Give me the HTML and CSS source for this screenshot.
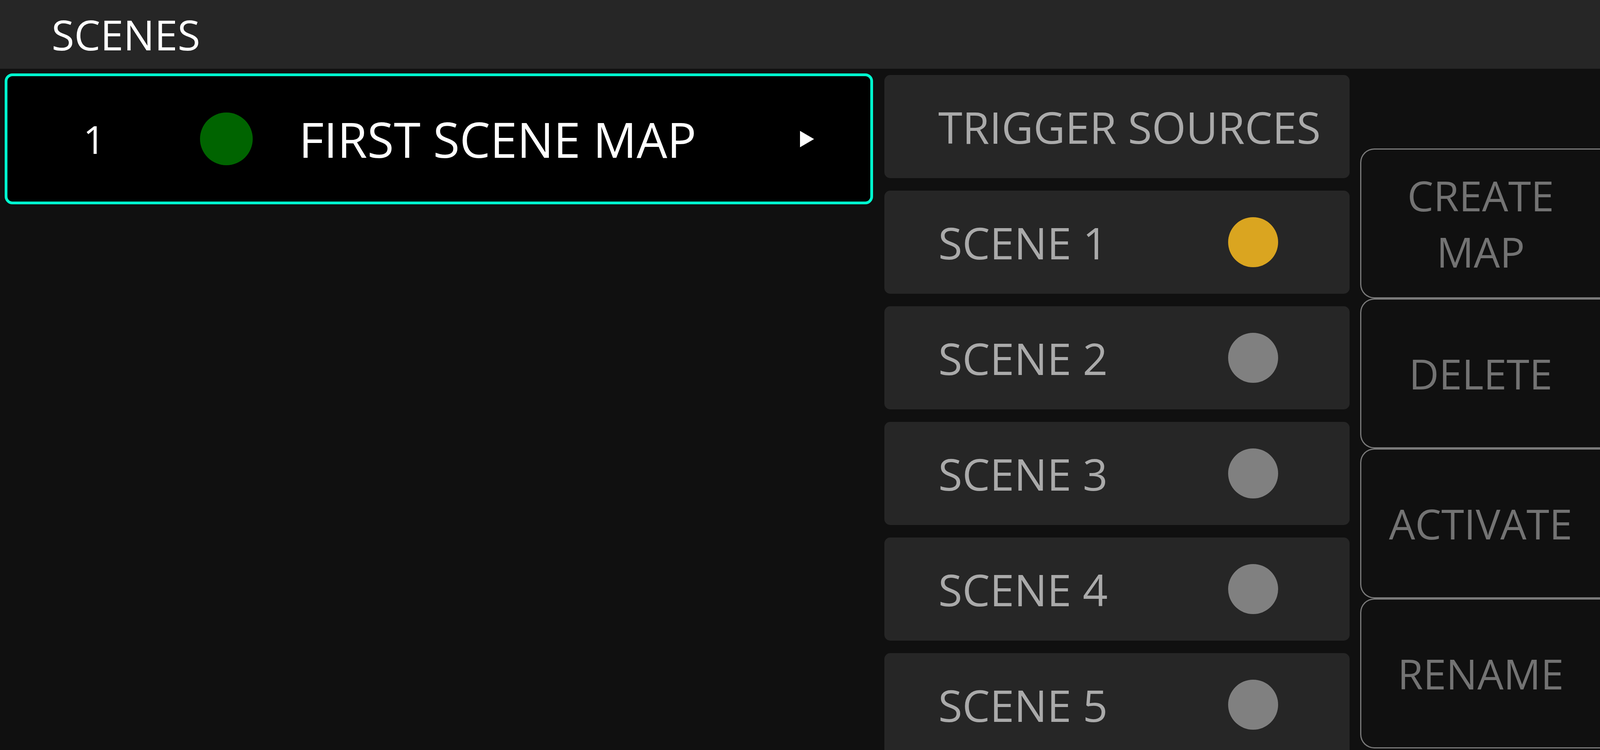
FILE: index.html
```html
<!DOCTYPE html>
<html lang="en">
<head>
    <meta charset="UTF-8">
    <title>Scenes</title>
    <link rel="stylesheet" href="styles.css">
</head>
<body>

    <!-- Top title bar -->
    <div class="topbar">SCENES</div>

    <div class="main">
        <!-- Scene map list -->
        <div class="map-list">
            <div class="map-item selected">
                <span class="map-index">1</span>
                <span class="map-dot"></span>
                <span class="map-name">FIRST SCENE MAP</span>
                <span class="map-arrow"></span>
            </div>
        </div>

        <!-- Trigger sources -->
        <div class="sources">
            <div class="source-row">TRIGGER SOURCES</div>
            <div class="source-row">SCENE 1 <span class="dot active"></span></div>
            <div class="source-row">SCENE 2 <span class="dot"></span></div>
            <div class="source-row">SCENE 3 <span class="dot"></span></div>
            <div class="source-row">SCENE 4 <span class="dot"></span></div>
            <div class="source-row">SCENE 5 <span class="dot"></span></div>
        </div>

        <!-- Side actions -->
        <div class="actions">
            <button class="action">CREATE<br>MAP</button>
            <button class="action">DELETE</button>
            <button class="action">ACTIVATE</button>
            <button class="action">RENAME</button>
        </div>
    </div>

</body>
</html>
```

FILE: styles.css
```css
html, body {
    margin: 0;
    height: 100%;
    overflow: hidden;
    background-color: #101010;
    font-family: 'Open Sans', 'Noto Sans', sans-serif;
}

/* Title bar */
.topbar {
    height: 176px;
    background-color: #262626;
    color: #ffffff;
    font-size: 106px;
    display: flex;
    align-items: center;
    padding-left: 132px;
    box-sizing: border-box;
}

.main {
    display: flex;
    align-items: flex-start;
    padding: 12px 0 0 12px;
}

/* Left: scene maps */
.map-list {
    width: 2223px;
    flex-shrink: 0;
}

.map-item {
    height: 335px;
    box-sizing: border-box;
    border: 7px solid #00ffd0;
    border-radius: 20px;
    background-color: #000000;
    color: #ffffff;
    display: flex;
    align-items: center;
}

.map-index {
    width: 180px;
    margin-left: 132px;
    text-align: center;
    font-size: 98px;
}

.map-dot {
    width: 135px;
    height: 135px;
    border-radius: 50%;
    background-color: #006400;
    margin-left: 181px;
}

.map-name {
    margin-left: 118px;
    font-size: 124px;
}

.map-arrow {
    margin-left: auto;
    margin-right: 144px;
    width: 0;
    height: 0;
    border-left: 36px solid #ffffff;
    border-top: 21px solid transparent;
    border-bottom: 21px solid transparent;
}

/* Middle: trigger sources */
.sources {
    flex: 1;
    min-width: 0;
    margin-left: 29px;
    margin-top: 4px;
    display: flex;
    flex-direction: column;
    gap: 32px;
}

.source-row {
    height: 264px;
    flex-shrink: 0;
    border-radius: 15px;
    background-color: #262626;
    color: #aaaaaa;
    font-size: 112px;
    white-space: nowrap;
    display: flex;
    align-items: center;
    justify-content: space-between;
    padding: 0 183px 0 138px;
    box-sizing: border-box;
}

.dot {
    width: 128px;
    height: 128px;
    flex-shrink: 0;
    border-radius: 50%;
    background-color: #808080;
}

.dot.active {
    background-color: #daa520;
}

/* Right: action buttons */
.actions {
    width: 614px;
    flex-shrink: 0;
    margin-left: 27px;
    margin-top: 192px;
    display: flex;
    flex-direction: column;
}

.action {
    width: 100%;
    height: 384px;
    box-sizing: border-box;
    border: 3px solid #7a7a7a;
    border-right: none;
    border-radius: 36px 0 0 36px;
    background-color: #101010;
    color: #737373;
    font-family: 'Open Sans', 'Noto Sans', sans-serif;
    font-size: 106px;
    line-height: 144px;
    padding: 0;
    text-align: center;
}
```
